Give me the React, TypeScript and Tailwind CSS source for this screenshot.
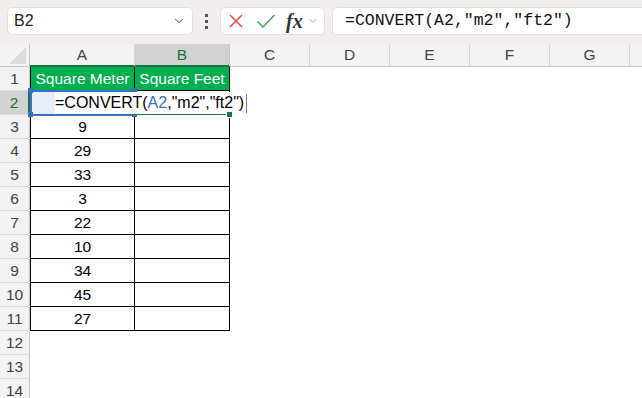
import { ChevronDown } from 'lucide-react';

const values = [9, 29, 33, 3, 22, 10, 34, 45, 27];
const rest = ['C', 'D', 'E', 'F', 'G'];

const font = { fontFamily: '"Liberation Sans", Arial, sans-serif' };

function RowHead({ n, active }: { n: number; active?: boolean }) {
  return (
    <div
      className={`w-[30px] h-[24px] shrink-0 flex items-center justify-center text-[15.5px] border-b border-[#dcdcdc] ${
        active ? 'bg-[#d2d2d2] text-[#1e6b3a] border-r-2 border-r-[#1e7145]' : 'bg-[#f3f3f3] text-[#444] border-r border-r-[#c6c6c6]'
      }`}
    >
      {n}
    </div>
  );
}

function Blank() {
  return (
    <>
      {rest.map((c) => (
        <div key={c} className="w-[80px] h-[24px] shrink-0" />
      ))}
      <div className="flex-1 h-[24px]" />
    </>
  );
}

export default function App() {
  return (
    <div className="w-[642px] h-[398px] bg-white overflow-hidden text-black" style={font}>
      {/* Formula bar */}
      <div className="h-[44px] bg-[#f2eeee] flex items-start pt-[7px] pl-[7px]">
        <div className="w-[186px] h-[28px] bg-white rounded-[5px] border border-[#e4e0e0] flex items-center pl-[6px] pr-[6px]">
          <span className="text-[16px] text-[#222] flex-1">B2</span>
          <ChevronDown className="w-[14px] h-[14px] text-[#444]" strokeWidth={1.6} />
        </div>
        <div className="w-[27px] h-[28px] flex flex-col items-center justify-center gap-[3px]">
          <div className="w-[3px] h-[3px] bg-[#555]" />
          <div className="w-[3px] h-[3px] bg-[#555]" />
          <div className="w-[3px] h-[3px] bg-[#555]" />
        </div>
        <div className="w-[105px] h-[28px] bg-white rounded-[5px] border border-[#e4e0e0] flex items-center pl-[7px]">
          <svg width="16" height="16" viewBox="0 0 16 16" className="mr-[12px]">
            <path d="M2 2 L14 14 M14 2 L2 14" stroke="#e5484d" strokeWidth="1.5" fill="none" />
          </svg>
          <svg width="20" height="16" viewBox="0 0 20 16" className="mr-[10px]">
            <path d="M1.5 8.5 L7 14 L18.5 2" stroke="#3aa55a" strokeWidth="1.5" fill="none" />
          </svg>
          <span
            className="text-[20px] italic font-bold text-[#333] leading-none"
            style={{ fontFamily: '"Liberation Serif", "Times New Roman", serif' }}
          >
            fx
          </span>
          <ChevronDown className="w-[12px] h-[12px] text-[#999] ml-[4px]" strokeWidth={1.6} />
        </div>
        <div className="flex-1 ml-[7px] h-[28px] bg-white rounded-l-[5px] border border-r-0 border-[#e4e0e0] flex items-center pl-[12px]">
          <span className="text-[16.5px] text-[#111]" style={{ fontFamily: '"Liberation Mono", "Courier New", monospace' }}>
            =CONVERT(A2,"m2","ft2")
          </span>
        </div>
      </div>

      {/* Column headers */}
      <div className="flex h-[23px] bg-[#f3f3f3] text-[15.5px] text-[#444]">
        <div className="w-[30px] shrink-0 border-r border-b border-[#c6c6c6] flex items-end justify-end pr-[3px] pb-[2px]">
          <svg width="17" height="17" viewBox="0 0 17 17">
            <path d="M17 0 L17 17 L0 17 Z" fill="#dcdcdc" />
          </svg>
        </div>
        <div className="w-[105px] shrink-0 border-r border-r-[#d4d4d4] border-b-2 border-b-[#1e7145] flex items-center justify-center">
          A
        </div>
        <div className="w-[95px] shrink-0 bg-[#d2d2d2] text-[#1e6b3a] border-r border-r-[#c6c6c6] border-b-2 border-b-[#1e7145] flex items-center justify-center">
          B
        </div>
        {rest.map((c) => (
          <div key={c} className="w-[80px] shrink-0 border-r border-[#d4d4d4] border-b border-b-[#c6c6c6] flex items-center justify-center">
            {c}
          </div>
        ))}
        <div className="flex-1 border-b border-[#c6c6c6]" />
      </div>

      {/* Row 1 */}
      <div className="flex text-[15.5px]">
        <RowHead n={1} />
        <div className="w-[105px] h-[24px] shrink-0 bg-[#00b050] text-white border-l border-r border-b border-black flex items-center justify-center">
          Square Meter
        </div>
        <div className="w-[95px] h-[24px] shrink-0 bg-[#00b050] text-white border-r border-b border-black flex items-center justify-center">
          Square Feet
        </div>
        <Blank />
      </div>

      {/* Row 2 - editing */}
      <div className="flex text-[15.5px] relative">
        <RowHead n={2} active />
        <div className="w-[105px] h-[24px] shrink-0 border-l border-r border-b border-black" />
        <div className="w-[95px] h-[24px] shrink-0 border-r border-b-2 border-r-black border-b-[#1e7145]" />
        <Blank />

        {/* reference highlight around A2 */}
        <div className="absolute left-[30px] top-[-1px] w-[105px] h-[26px] border-2 border-[#3a6fc4] bg-[#e8edf7]" />
        <div className="absolute left-[28px] top-[-3px] w-[5px] h-[5px] bg-[#3a6fc4]" />
        <div className="absolute left-[132px] top-[-3px] w-[5px] h-[5px] bg-[#3a6fc4]" />
        <div className="absolute left-[28px] top-[21px] w-[5px] h-[5px] bg-[#3a6fc4]" />
        <div className="absolute left-[132px] top-[21px] w-[5px] h-[5px] bg-[#3a6fc4]" />

        {/* in-cell editor */}
        <div className="absolute left-[55px] top-[1px] h-[22px] bg-white flex items-center pr-[1px] text-[16px]">
          <span>
            =CONVERT(<span className="text-[#3a6fc4]">A2</span>,"m2","ft2")
          </span>
          <div className="w-[1px] h-[19px] bg-[#777] ml-[2px]" />
        </div>

        {/* fill handle */}
        <div className="absolute left-[227px] top-[21px] w-[5px] h-[5px] bg-[#1e7145] outline outline-1 outline-white" />
      </div>

      {/* Rows 3-11 */}
      {values.map((v, i) => (
        <div key={i} className="flex text-[15.5px]">
          <RowHead n={i + 3} />
          <div className="w-[105px] h-[24px] shrink-0 border-l border-r border-b border-black flex items-center justify-center">
            {v}
          </div>
          <div className="w-[95px] h-[24px] shrink-0 border-r border-b border-black" />
          <Blank />
        </div>
      ))}

      {/* Rows 12-14 */}
      {[12, 13, 14].map((n) => (
        <div key={n} className="flex">
          <RowHead n={n} />
          <div className="w-[105px] h-[24px] shrink-0" />
          <div className="w-[95px] h-[24px] shrink-0" />
          <Blank />
        </div>
      ))}
    </div>
  );
}
